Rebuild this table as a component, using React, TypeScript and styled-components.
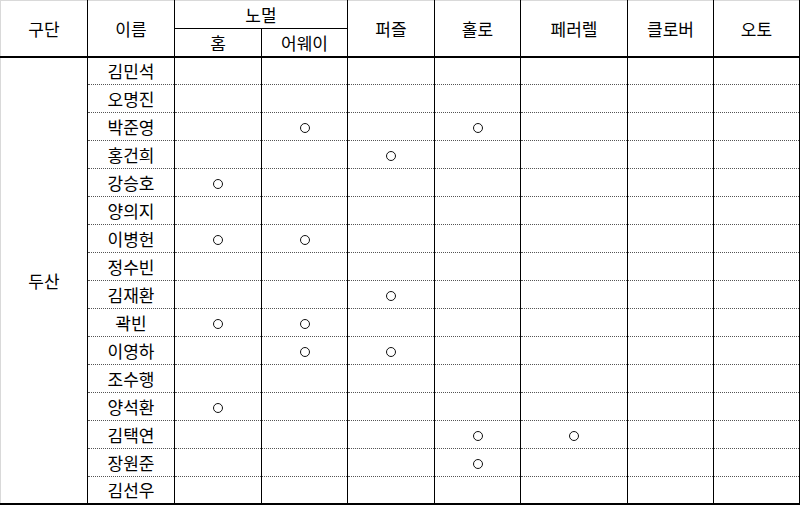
import * as React from 'react';
import styled, { createGlobalStyle } from 'styled-components';

const GlobalStyle = createGlobalStyle`
  html, body {
    margin: 0;
    padding: 0;
    background: #ffffff;
  }
  body {
    font-family: "Noto Sans CJK KR", "Noto Sans", sans-serif;
    color: #000;
  }
`;

type Mark = 'home' | 'away' | 'puzzle' | 'holo' | 'parallel' | 'clover' | 'auto';

const columns: Mark[] = ['home', 'away', 'puzzle', 'holo', 'parallel', 'clover', 'auto'];

const players: { name: string; marks: Mark[] }[] = [
  { name: '김민석', marks: [] },
  { name: '오명진', marks: [] },
  { name: '박준영', marks: ['away', 'holo'] },
  { name: '홍건희', marks: ['puzzle'] },
  { name: '강승호', marks: ['home'] },
  { name: '양의지', marks: [] },
  { name: '이병헌', marks: ['home', 'away'] },
  { name: '정수빈', marks: [] },
  { name: '김재환', marks: ['puzzle'] },
  { name: '곽빈', marks: ['home', 'away'] },
  { name: '이영하', marks: ['away', 'puzzle'] },
  { name: '조수행', marks: [] },
  { name: '양석환', marks: ['home'] },
  { name: '김택연', marks: ['holo', 'parallel'] },
  { name: '장원준', marks: ['holo'] },
  { name: '김선우', marks: [] },
];

const colWidths = [87, 87, 87, 86, 87, 86, 107, 86, 86];

// ── Styled Components ─────────────────────────────
const Sheet = styled.div`
  width: 800px;
  height: 505px;
  overflow: hidden;
  background: #fff;
`;

const Table = styled.table`
  border-collapse: collapse;
  table-layout: fixed;
  width: 799px;
  border-top: 1px solid #d9d9d9;
  border-left: 1px solid #d9d9d9;
`;

const Row = styled.tr<{ $h?: number }>`
  height: ${({ $h }) => $h ?? 28}px;
`;

const HeadCell = styled.th<{ $thick?: boolean }>`
  font-weight: 400;
  font-size: 17px;
  text-align: center;
  vertical-align: middle;
  padding: 0;
  border-right: 1px solid #000;
  border-bottom: ${({ $thick }) => ($thick ? '2px solid #000' : '1px solid #000')};
  line-height: 1;
`;

const TeamCell = styled.td`
  font-size: 17px;
  text-align: center;
  vertical-align: middle;
  padding: 0;
  border-right: 1px solid #000;
  border-bottom: 2px solid #000;
`;

const Cell = styled.td<{ $last?: boolean }>`
  font-size: 17px;
  text-align: center;
  vertical-align: middle;
  padding: 0;
  line-height: 1;
  border-right: 1px solid #000;
  border-bottom: ${({ $last }) => ($last ? '2px solid #000' : '1px dotted #555')};
`;

const Circle = styled.span`
  display: inline-block;
  width: 8px;
  height: 8px;
  border: 1.5px solid #111;
  border-radius: 50%;
  vertical-align: middle;
  margin-top: -2px;
`;

// ── Component ─────────────────────────────
export default function App(): React.ReactElement {
  return (
    <Sheet>
      <GlobalStyle />
      <Table>
        <colgroup>
          {colWidths.map((w, i) => (
            <col key={i} style={{ width: w }} />
          ))}
        </colgroup>
        <thead>
          <Row>
            <HeadCell rowSpan={2} $thick>구단</HeadCell>
            <HeadCell rowSpan={2} $thick>이름</HeadCell>
            <HeadCell colSpan={2}>노멀</HeadCell>
            <HeadCell rowSpan={2} $thick>퍼즐</HeadCell>
            <HeadCell rowSpan={2} $thick>홀로</HeadCell>
            <HeadCell rowSpan={2} $thick>페러렐</HeadCell>
            <HeadCell rowSpan={2} $thick>클로버</HeadCell>
            <HeadCell rowSpan={2} $thick>오토</HeadCell>
          </Row>
          <Row>
            <HeadCell $thick>홈</HeadCell>
            <HeadCell $thick>어웨이</HeadCell>
          </Row>
        </thead>
        <tbody>
          {players.map((p, i) => {
            const last = i === players.length - 1;
            return (
              <Row key={p.name} $h={27.97}>
                {i === 0 && <TeamCell rowSpan={players.length}>두산</TeamCell>}
                <Cell $last={last}>{p.name}</Cell>
                {columns.map((c) => (
                  <Cell key={c} $last={last}>
                    {p.marks.includes(c) && <Circle aria-label="○" />}
                  </Cell>
                ))}
              </Row>
            );
          })}
        </tbody>
      </Table>
    </Sheet>
  );
}
